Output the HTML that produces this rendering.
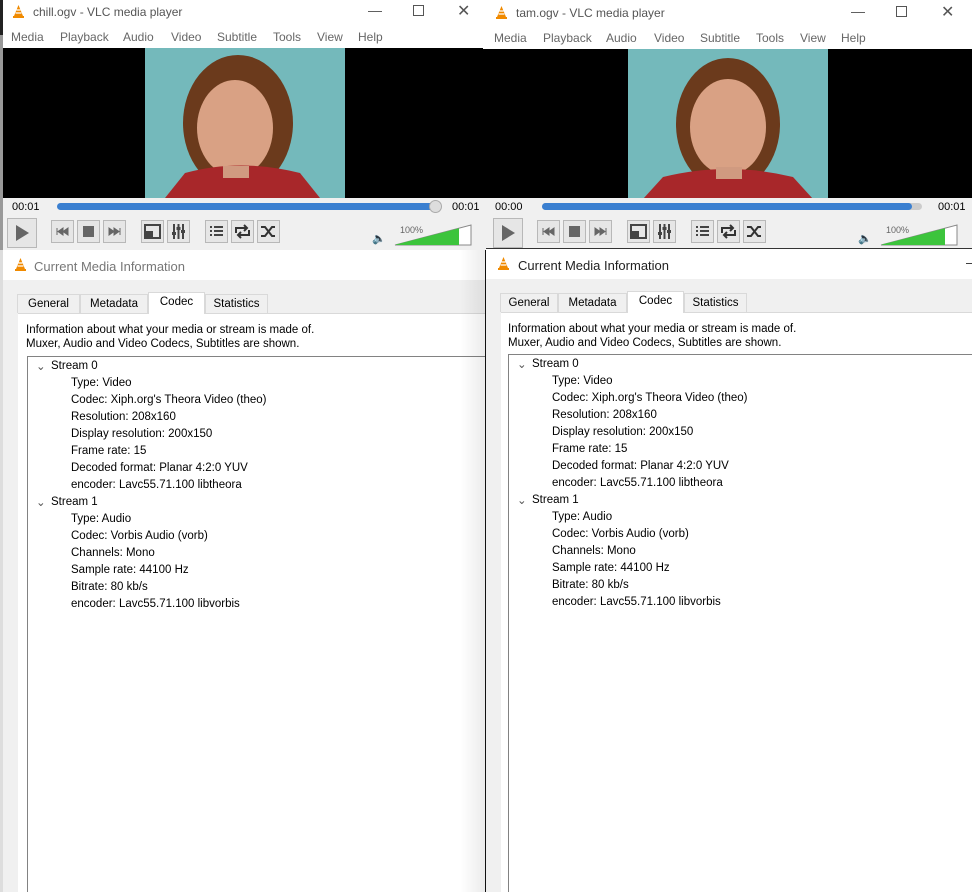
<!DOCTYPE html>
<html><head><meta charset="utf-8"><style>
*{margin:0;padding:0;box-sizing:border-box}
body{width:972px;height:892px;overflow:hidden;background:#fff;font-family:"Liberation Sans",sans-serif;font-size:12px;color:#000;position:relative}
.a{position:absolute}
.win{position:absolute;top:0;width:486px;height:892px;overflow:hidden}
.title{position:absolute;left:0;top:0;width:100%;height:25px;background:#fff;color:#555;font-size:12px}
.menu{position:absolute;left:0;top:25px;width:100%;height:23px;background:#fff;color:#666;font-size:12px}
.menu span{position:absolute;top:5px}
.video{position:absolute;left:3px;top:48px;right:0;height:150px;background:#000}
.ctrl{position:absolute;left:3px;top:198px;right:0;height:52px;background:#f0f0f0}
.btn{position:absolute;top:22px;width:23px;height:23px;border:1px solid #b8b8b8;background:#e6e6e6}
.info{position:absolute;left:3px;right:0;bottom:0;background:#f0f0f0}
.ititle{position:absolute;left:0;top:0;right:0;height:30px;background:#fff;font-size:13px;color:#222}
.tab{position:absolute;top:0;height:19px;border:1px solid #d9d9d9;border-bottom:none;background:#f0f0f0;font-size:11.5px;padding-top:3px;text-align:center}
.tree{position:absolute;left:24px;right:-20px;bottom:-2px;background:#fff;border:1px solid #828282}
.row{position:absolute;left:0;font-size:11.5px;white-space:nowrap}
</style></head><body>

<!-- LEFT WINDOW -->
<div class="win" style="left:0">
 <div class="title"><svg class="a" style="left:11px;top:4px" width="15" height="15" viewBox="0 0 15 15"><path d="M7.5 1 L12 12 H3 Z" fill="#f08a00"/><path d="M5.5 6h4M4.6 9h5.8" stroke="#fff" stroke-width="1.3"/><rect x="2" y="12" width="11" height="2" fill="#f08a00"/></svg><span class="a" style="left:33px;top:5px">chill.ogv - VLC media player</span><span class="a" style="left:368px;top:2px;font-size:14px">—</span><span class="a" style="left:413px;top:5px;width:11px;height:11px;border:1px solid #555"></span><span class="a" style="left:457px;top:1px;font-size:16px">✕</span></div>
 <div class="menu"><span style="left:11px">Media</span><span style="left:60px">Playback</span><span style="left:123px">Audio</span><span style="left:171px">Video</span><span style="left:217px">Subtitle</span><span style="left:273px">Tools</span><span style="left:317px">View</span><span style="left:358px">Help</span></div>
 <div class="video"><svg class="a" style="left:142px;top:0" width="200" height="150"><rect width="200" height="150" fill="#74b9bb"/><ellipse cx="93" cy="75" rx="55" ry="68" fill="#6b3a1c"/><ellipse cx="90" cy="80" rx="38" ry="48" fill="#d9a184"/><path d="M40 125 Q95 110 155 125 L175 150 H20 Z" fill="#a8272a"/><rect x="78" y="118" width="26" height="12" fill="#d09a80"/></svg></div>
 <div class="ctrl">
  <span class="a" style="left:9px;top:3px;font-size:11px">00:01</span><span class="a" style="left:449px;top:3px;font-size:11px">00:01</span>
  <div class="a" style="left:54px;top:5px;width:382px;height:7px;border-radius:4px;background:#3a7fd0"></div>
  <div class="a" style="left:426px;top:2px;width:13px;height:13px;border-radius:7px;background:#ddd;border:1px solid #aaa"></div>
  <div class="btn" style="left:4px;top:20px;width:30px;height:30px"><svg width="28" height="28"><path d="M8 6 L21 14 L8 22Z" fill="#666"/></svg></div>
  <div class="btn" style="left:48px"><svg width="21" height="21"><path d="M5 7v7M11 7l-5 3.5 5 3.5zM16 7l-5 3.5 5 3.5z" fill="#666" stroke="#666"/></svg></div>
  <div class="btn" style="left:74px"><svg width="21" height="21"><rect x="5" y="5" width="11" height="11" fill="#666"/></svg></div>
  <div class="btn" style="left:100px"><svg width="21" height="21"><path d="M16 7v7M5 7l5 3.5-5 3.5zM10 7l5 3.5-5 3.5z" fill="#666" stroke="#666"/></svg></div>
  <div class="btn" style="left:138px"><svg width="21" height="21"><rect x="3" y="4" width="15" height="13" fill="none" stroke="#444" stroke-width="2"/><rect x="4" y="10" width="7" height="6" fill="#444"/></svg></div>
  <div class="btn" style="left:164px"><svg width="21" height="21"><path d="M6 3v15M10.5 3v15M15 3v15" stroke="#444" stroke-width="2"/><rect x="4" y="11" width="4" height="3" fill="#444"/><rect x="8.5" y="6" width="4" height="3" fill="#444"/><rect x="13" y="9" width="4" height="3" fill="#444"/></svg></div>
  <div class="btn" style="left:202px"><svg width="21" height="21"><path d="M4 6h2M4 10h2M4 14h2M8 6h9M8 10h9M8 14h9" stroke="#444" stroke-width="2"/></svg></div>
  <div class="btn" style="left:228px"><svg width="21" height="21"><path d="M4 12V7h11M12 4l3 3-3 3M17 9v5H6M9 17l-3-3 3-3" fill="none" stroke="#333" stroke-width="2"/></svg></div>
  <div class="btn" style="left:254px"><svg width="21" height="21"><path d="M3 6h4l7 9h3M3 15h4l7-9h3" fill="none" stroke="#333" stroke-width="2"/></svg></div>
  <span class="a" style="left:369px;top:34px;font-size:11px;color:#555">🔈</span>
  <span class="a" style="left:397px;top:27px;font-size:9px;color:#666">100%</span>
  <svg class="a" style="left:390px;top:25px" width="80" height="24"><path d="M2 22 L78 2 V22Z" fill="#fff" stroke="#888"/><path d="M3 21.5 L66 5.2 V22 H3Z" fill="#3cc43c"/></svg>
 </div>
 <div class="info" style="top:250px">
  <div class="ititle"><svg class="a" style="left:10px;top:7px" width="15" height="15" viewBox="0 0 15 15"><path d="M7.5 1 L12 12 H3 Z" fill="#f08a00"/><path d="M5.5 6h4M4.6 9h5.8" stroke="#fff" stroke-width="1.3"/><rect x="2" y="12" width="11" height="2" fill="#f08a00"/></svg><span class="a" style="left:31px;top:9px;color:#777">Current Media Information</span></div>
  <div class="a" style="left:15px;top:63px;right:0;bottom:0;border-top:1px solid #d9d9d9;background:#fff"></div>
  <div class="a" style="left:14px;top:44px;width:500px;height:20px">
   <div class="tab" style="left:0;width:63px">General</div><div class="tab" style="left:63px;width:68px">Metadata</div><div class="tab" style="left:131px;width:57px;background:#fff;top:-2px;height:22px">Codec</div><div class="tab" style="left:188px;width:63px">Statistics</div>
  </div>
  <div class="a" style="left:23px;top:73px;font-size:11.5px;line-height:14px">Information about what your media or stream is made of.<br>Muxer, Audio and Video Codecs, Subtitles are shown.</div>
  <div class="tree" style="top:106px">
   <div class="row" style="left:8px;top:2px;color:#555">⌄</div>
   <div class="row" style="left:23px;top:3px">Stream 0</div>
   <div class="row" style="left:43px;top:20px">Type: Video</div>
   <div class="row" style="left:43px;top:37px">Codec: Xiph.org's Theora Video (theo)</div>
   <div class="row" style="left:43px;top:54px">Resolution: 208x160</div>
   <div class="row" style="left:43px;top:71px">Display resolution: 200x150</div>
   <div class="row" style="left:43px;top:88px">Frame rate: 15</div>
   <div class="row" style="left:43px;top:105px">Decoded format: Planar 4:2:0 YUV</div>
   <div class="row" style="left:43px;top:122px">encoder: Lavc55.71.100 libtheora</div>
   <div class="row" style="left:8px;top:138px;color:#555">⌄</div>
   <div class="row" style="left:23px;top:139px">Stream 1</div>
   <div class="row" style="left:43px;top:156px">Type: Audio</div>
   <div class="row" style="left:43px;top:173px">Codec: Vorbis Audio (vorb)</div>
   <div class="row" style="left:43px;top:190px">Channels: Mono</div>
   <div class="row" style="left:43px;top:207px">Sample rate: 44100 Hz</div>
   <div class="row" style="left:43px;top:224px">Bitrate: 80 kb/s</div>
   <div class="row" style="left:43px;top:241px">encoder: Lavc55.71.100 libvorbis</div>
  </div>
 </div>
 <div class="a" style="left:0;top:0;width:3px;height:35px;background:#222"></div>
 <div class="a" style="left:0;top:35px;width:3px;height:215px;background:#999"></div>
 <div class="a" style="left:0;top:250px;width:3px;height:642px;background:#ddd"></div>
</div>
<div class="a" style="left:485px;top:250px;width:1px;height:642px;background:#111"></div>
<div class="a" style="left:460px;top:250px;width:25px;height:642px;background:linear-gradient(90deg,rgba(0,0,0,0),rgba(0,0,0,.08))"></div>

<!-- RIGHT WINDOW -->
<div class="win" style="left:483px;width:489px">
 <div class="title" style="top:1px"><svg class="a" style="left:11px;top:4px" width="15" height="15" viewBox="0 0 15 15"><path d="M7.5 1 L12 12 H3 Z" fill="#f08a00"/><path d="M5.5 6h4M4.6 9h5.8" stroke="#fff" stroke-width="1.3"/><rect x="2" y="12" width="11" height="2" fill="#f08a00"/></svg><span class="a" style="left:33px;top:5px">tam.ogv - VLC media player</span><span class="a" style="left:368px;top:2px;font-size:14px">—</span><span class="a" style="left:413px;top:5px;width:11px;height:11px;border:1px solid #555"></span><span class="a" style="left:458px;top:1px;font-size:16px">✕</span></div>
 <div class="menu" style="top:26px"><span style="left:11px">Media</span><span style="left:60px">Playback</span><span style="left:123px">Audio</span><span style="left:171px">Video</span><span style="left:217px">Subtitle</span><span style="left:273px">Tools</span><span style="left:317px">View</span><span style="left:358px">Help</span></div>
 <div class="video" style="top:49px;height:149px"><svg class="a" style="left:142px;top:0" width="200" height="150"><rect width="200" height="150" fill="#74b9bb"/><ellipse cx="100" cy="75" rx="52" ry="66" fill="#6b3a1c"/><ellipse cx="100" cy="78" rx="38" ry="48" fill="#d9a184"/><path d="M35 128 Q100 112 165 128 L185 150 H15 Z" fill="#a8272a"/><rect x="88" y="118" width="26" height="12" fill="#d09a80"/></svg></div>
 <div class="ctrl">
  <span class="a" style="left:9px;top:3px;font-size:11px">00:00</span><span class="a" style="left:452px;top:3px;font-size:11px">00:01</span>
  <div class="a" style="left:56px;top:5px;width:380px;height:7px;border-radius:4px;background:#ccc"></div>
  <div class="a" style="left:56px;top:5px;width:370px;height:7px;border-radius:4px;background:#3a7fd0"></div>
  <div class="btn" style="left:7px;top:20px;width:30px;height:30px"><svg width="28" height="28"><path d="M8 6 L21 14 L8 22Z" fill="#666"/></svg></div>
  <div class="btn" style="left:51px"><svg width="21" height="21"><path d="M5 7v7M11 7l-5 3.5 5 3.5zM16 7l-5 3.5 5 3.5z" fill="#666" stroke="#666"/></svg></div>
  <div class="btn" style="left:77px"><svg width="21" height="21"><rect x="5" y="5" width="11" height="11" fill="#666"/></svg></div>
  <div class="btn" style="left:103px"><svg width="21" height="21"><path d="M16 7v7M5 7l5 3.5-5 3.5zM10 7l5 3.5-5 3.5z" fill="#666" stroke="#666"/></svg></div>
  <div class="btn" style="left:141px"><svg width="21" height="21"><rect x="3" y="4" width="15" height="13" fill="none" stroke="#444" stroke-width="2"/><rect x="4" y="10" width="7" height="6" fill="#444"/></svg></div>
  <div class="btn" style="left:167px"><svg width="21" height="21"><path d="M6 3v15M10.5 3v15M15 3v15" stroke="#444" stroke-width="2"/><rect x="4" y="11" width="4" height="3" fill="#444"/><rect x="8.5" y="6" width="4" height="3" fill="#444"/><rect x="13" y="9" width="4" height="3" fill="#444"/></svg></div>
  <div class="btn" style="left:205px"><svg width="21" height="21"><path d="M4 6h2M4 10h2M4 14h2M8 6h9M8 10h9M8 14h9" stroke="#444" stroke-width="2"/></svg></div>
  <div class="btn" style="left:231px"><svg width="21" height="21"><path d="M4 12V7h11M12 4l3 3-3 3M17 9v5H6M9 17l-3-3 3-3" fill="none" stroke="#333" stroke-width="2"/></svg></div>
  <div class="btn" style="left:257px"><svg width="21" height="21"><path d="M3 6h4l7 9h3M3 15h4l7-9h3" fill="none" stroke="#333" stroke-width="2"/></svg></div>
  <span class="a" style="left:372px;top:34px;font-size:11px;color:#555">🔈</span>
  <span class="a" style="left:400px;top:27px;font-size:9px;color:#666">100%</span>
  <svg class="a" style="left:393px;top:25px" width="80" height="24"><path d="M2 22 L78 2 V22Z" fill="#fff" stroke="#888"/><path d="M3 21.5 L66 5.2 V22 H3Z" fill="#3cc43c"/></svg>
 </div>
 <div class="info" style="top:248px;left:3px;border-top:1px solid #333">
  <div class="ititle"><svg class="a" style="left:10px;top:7px" width="15" height="15" viewBox="0 0 15 15"><path d="M7.5 1 L12 12 H3 Z" fill="#f08a00"/><path d="M5.5 6h4M4.6 9h5.8" stroke="#fff" stroke-width="1.3"/><rect x="2" y="12" width="11" height="2" fill="#f08a00"/></svg><span class="a" style="left:32px;top:9px">Current Media Information</span><span class="a" style="left:480px;top:6px">–</span></div>
  <div class="a" style="left:15px;top:63px;right:0;bottom:0;border-top:1px solid #d9d9d9;background:#fff"></div>
  <div class="a" style="left:14px;top:44px;width:500px;height:20px">
   <div class="tab" style="left:0;width:58px">General</div><div class="tab" style="left:58px;width:69px">Metadata</div><div class="tab" style="left:127px;width:57px;background:#fff;top:-2px;height:22px">Codec</div><div class="tab" style="left:184px;width:63px">Statistics</div>
  </div>
  <div class="a" style="left:22px;top:73px;font-size:11.5px;line-height:14px">Information about what your media or stream is made of.<br>Muxer, Audio and Video Codecs, Subtitles are shown.</div>
  <div class="tree" style="top:105px;left:22px">
   <div class="row" style="left:8px;top:2px;color:#555">⌄</div>
   <div class="row" style="left:23px;top:3px">Stream 0</div>
   <div class="row" style="left:43px;top:20px">Type: Video</div>
   <div class="row" style="left:43px;top:37px">Codec: Xiph.org's Theora Video (theo)</div>
   <div class="row" style="left:43px;top:54px">Resolution: 208x160</div>
   <div class="row" style="left:43px;top:71px">Display resolution: 200x150</div>
   <div class="row" style="left:43px;top:88px">Frame rate: 15</div>
   <div class="row" style="left:43px;top:105px">Decoded format: Planar 4:2:0 YUV</div>
   <div class="row" style="left:43px;top:122px">encoder: Lavc55.71.100 libtheora</div>
   <div class="row" style="left:8px;top:138px;color:#555">⌄</div>
   <div class="row" style="left:23px;top:139px">Stream 1</div>
   <div class="row" style="left:43px;top:156px">Type: Audio</div>
   <div class="row" style="left:43px;top:173px">Codec: Vorbis Audio (vorb)</div>
   <div class="row" style="left:43px;top:190px">Channels: Mono</div>
   <div class="row" style="left:43px;top:207px">Sample rate: 44100 Hz</div>
   <div class="row" style="left:43px;top:224px">Bitrate: 80 kb/s</div>
   <div class="row" style="left:43px;top:241px">encoder: Lavc55.71.100 libvorbis</div>
  </div>
 </div>
</div>
</body></html>
